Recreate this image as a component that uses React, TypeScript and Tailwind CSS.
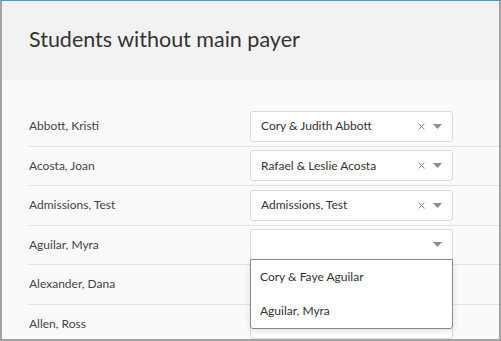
interface Row {
  student: string;
  payer: string;
}

const rows: Row[] = [
  { student: 'Abbott, Kristi', payer: 'Cory & Judith Abbott' },
  { student: 'Acosta, Joan', payer: 'Rafael & Leslie Acosta' },
  { student: 'Admissions, Test', payer: 'Admissions, Test' },
  { student: 'Aguilar, Myra', payer: '' },
  { student: 'Alexander, Dana', payer: '' },
  { student: 'Allen, Ross', payer: '' },
];

const options = ['Cory & Faye Aguilar', 'Aguilar, Myra'];

function Caret() {
  return (
    <svg width="9" height="5" viewBox="0 0 9 5" className="shrink-0">
      <path d="M0 0 L9 0 L4.5 5 Z" fill="#8c8c8c" />
    </svg>
  );
}

function Clear() {
  return (
    <svg width="7" height="7" viewBox="0 0 7 7" className="shrink-0">
      <path d="M0.5 0.5 L6.5 6.5 M6.5 0.5 L0.5 6.5" stroke="#8c8c8c" strokeWidth="1" />
    </svg>
  );
}

function PayerSelect({ value, open }: { value: string; open?: boolean }) {
  return (
    <div className="relative w-[203px]">
      <div
        className={`flex items-center h-[31px] bg-white border border-[#dadada] pl-[10px] pr-[10px] ${
          open ? 'rounded-t-[3px]' : 'rounded-[3px]'
        }`}
      >
        <span className="flex-1 text-[12px] text-[#333] truncate">{value}</span>
        {value && (
          <span className="mr-[8px] flex items-center">
            <Clear />
          </span>
        )}
        <Caret />
      </div>
      {open && (
        <div className="absolute left-0 top-[30px] z-10 w-full bg-white border border-[#8a8a8a] rounded-b-[3px] shadow-[0_2px_6px_rgba(0,0,0,0.12)]">
          {options.map((opt) => (
            <div key={opt} className="h-[34px] flex items-center pl-[9px] text-[12px] text-[#333]">
              {opt}
            </div>
          ))}
        </div>
      )}
    </div>
  );
}

export default function App() {
  return (
    <div className="w-[501px] h-[341px] overflow-hidden bg-[#fafafa] border-t border-t-[#3d9bd8] border-x-2 border-b-2 border-x-[#a3a3a3] border-b-[#a3a3a3] font-['Lato',sans-serif] text-[#333] box-border">
      <div className="h-[79px] bg-[#f2f2f2] flex items-center pl-[27px] pb-[3px]">
        <h1 className="text-[21.5px] font-normal text-[#333]">Students without main payer</h1>
      </div>
      <div className="pt-[27px] pl-[27px]">
        {rows.map((row, i) => (
          <div key={row.student} className="flex items-center h-[39.5px] border-b border-[#e2e2e2]">
            <div className="w-[221px] text-[12px] text-[#444]">{row.student}</div>
            <PayerSelect value={row.payer} open={i === 3} />
          </div>
        ))}
      </div>
    </div>
  );
}
